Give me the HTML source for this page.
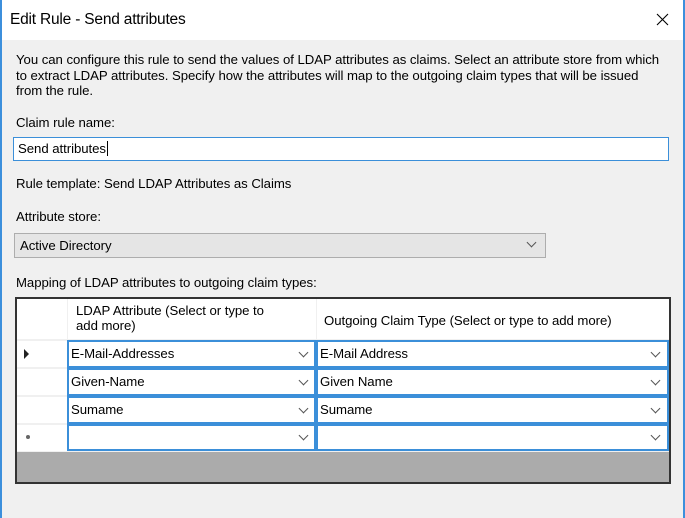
<!DOCTYPE html>
<html><head><style>
*{margin:0;padding:0;box-sizing:border-box}
body{width:685px;height:518px;overflow:hidden;background:#f0f0f0;font-family:"Liberation Sans",sans-serif;font-size:13.2px;color:#000;position:relative;letter-spacing:-0.05px}
.a{position:absolute;white-space:nowrap}
.chev{position:absolute;width:7px;height:7px;border-right:1px solid #555;border-bottom:1px solid #555;transform:rotate(45deg)}
.cell{position:absolute;background:#fff;border:2px solid #3b8fd9;padding-left:2px;line-height:23px}
</style></head><body>
<div class="a" style="left:0;top:0;width:685px;height:40px;background:#fff"></div>
<div class="a" style="left:0;top:0;width:2px;height:518px;background:#3c8fdc"></div>
<div class="a" style="left:683px;top:0;width:2px;height:518px;background:#3c8fdc"></div>
<div class="a" style="left:10px;top:11px;font-size:15.5px;letter-spacing:-0.2px">Edit Rule - Send attributes</div>
<svg class="a" style="left:656px;top:13px" width="13" height="13"><path d="M1 1L12 12M12 1L1 12" stroke="#000" stroke-width="1.1"/></svg>
<div class="a" style="left:16px;top:52px;line-height:15.5px">You can configure this rule to send the values of LDAP attributes as claims. Select an attribute store from which<br>to extract LDAP attributes. Specify how the attributes will map to the outgoing claim types that will be issued<br>from the rule.</div>
<div class="a" style="left:16px;top:115px">Claim rule name:</div>
<div class="a" style="left:13px;top:137px;width:656px;height:24px;background:#fff;border:1px solid #3b8fd9;padding-left:4px;line-height:22px">Send attributes<span style="border-left:1px solid #000;margin-left:1px"></span></div>
<div class="a" style="left:16px;top:176px">Rule template: Send LDAP Attributes as Claims</div>
<div class="a" style="left:16px;top:209px">Attribute store:</div>
<div class="a" style="left:14px;top:233px;width:532px;height:25px;background:#e5e5e5;border:1px solid #adadad;padding-left:5px;line-height:23px">Active Directory</div>
<div class="chev" style="left:528px;top:239px"></div>
<div class="a" style="left:16px;top:275px">Mapping of LDAP attributes to outgoing claim types:</div>
<div class="a" style="left:15px;top:297px;width:656px;height:187px;background:#ababab;border:2px solid #333"></div>
<div class="a" style="left:17px;top:299px;width:652px;height:153px;background:#f0f0f0"></div>
<div class="a" style="left:17px;top:299px;width:50px;height:40px;background:#fff"></div>
<div class="a" style="left:68px;top:299px;width:248px;height:40px;background:#fff;padding:4px 0 0 8px;line-height:15px;white-space:normal">LDAP Attribute (Select or type to<br>add more)</div>
<div class="a" style="left:317px;top:299px;width:352px;height:40px;background:#fff;padding:14px 0 0 7px">Outgoing Claim Type (Select or type to add more)</div>
<div class="a" style="left:17px;top:341px;width:50px;height:26px;background:#fff"></div>
<div class="a" style="left:17px;top:369px;width:50px;height:26px;background:#fff"></div>
<div class="a" style="left:17px;top:397px;width:50px;height:26px;background:#fff"></div>
<div class="a" style="left:17px;top:425px;width:50px;height:26px;background:#fff"></div>
<svg class="a" style="left:24px;top:349px" width="6" height="10"><path d="M0 0L5 5L0 10Z" fill="#222"/></svg>
<div class="a" style="left:26px;top:435px;width:4px;height:4px;border-radius:2px;background:#666"></div>
<div class="cell" style="left:67px;top:340px;width:249px;height:28px">E-Mail-Addresses</div>
<div class="cell" style="left:316px;top:340px;width:353px;height:28px">E-Mail Address</div>
<div class="cell" style="left:67px;top:368px;width:249px;height:28px">Given-Name</div>
<div class="cell" style="left:316px;top:368px;width:353px;height:28px">Given Name</div>
<div class="cell" style="left:67px;top:396px;width:249px;height:28px">Sumame</div>
<div class="cell" style="left:316px;top:396px;width:353px;height:28px">Sumame</div>
<div class="cell" style="left:67px;top:424px;width:249px;height:27px"></div>
<div class="cell" style="left:316px;top:424px;width:353px;height:27px"></div>
<div class="chev" style="left:300px;top:349px"></div>
<div class="chev" style="left:652px;top:349px"></div>
<div class="chev" style="left:300px;top:377px"></div>
<div class="chev" style="left:652px;top:377px"></div>
<div class="chev" style="left:300px;top:405px"></div>
<div class="chev" style="left:652px;top:405px"></div>
<div class="chev" style="left:300px;top:432px"></div>
<div class="chev" style="left:652px;top:432px"></div>
</body></html>
